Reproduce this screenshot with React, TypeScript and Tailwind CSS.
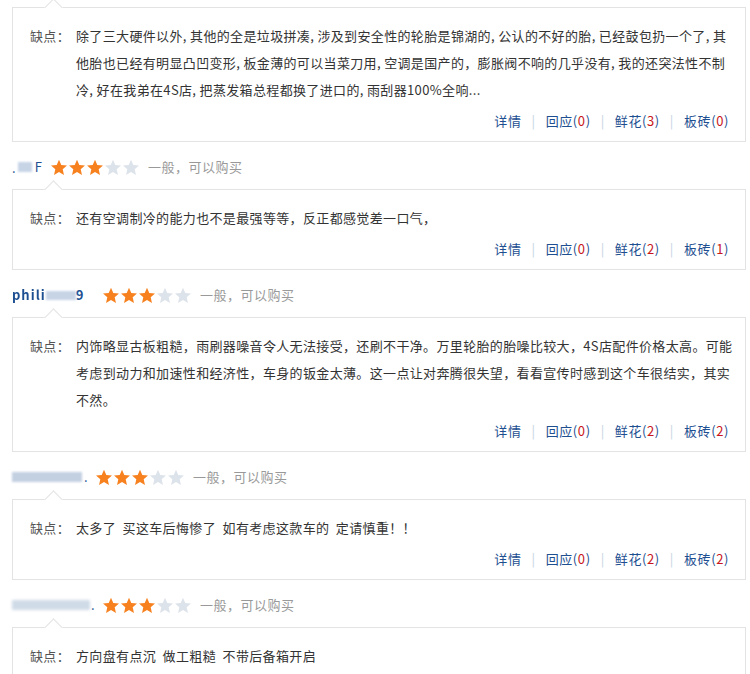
import React from 'react';

interface Review {
  user: React.ReactNode;
  userWidth: number;
  lines: string[];
  counts: [number, number, number];
}

const reviews: Review[] = [
  {
    user: null,
    userWidth: 0,
    lines: [
      '除了三大硬件以外, 其他的全是垃圾拼凑, 涉及到安全性的轮胎是锦湖的, 公认的不好的胎, 已经鼓包扔一个了, 其',
      '他胎也已经有明显凸凹变形, 板金薄的可以当菜刀用, 空调是国产的，膨胀阀不响的几乎没有, 我的还突法性不制',
      '冷, 好在我弟在4S店, 把蒸发箱总程都换了进口的, 雨刮器100%全响...',
    ],
    counts: [0, 3, 0],
  },
  {
    user: (
      <span className="flex items-center">
        <span className="text-[#1d4f91] text-[13px] leading-none">.</span>
        <span className="ml-[2px] inline-block h-[10px] w-[14px] bg-[#c6d4e6] blur-[1px]" />
        <span className="ml-[3px] text-[#1d4f91] text-[13px]">F</span>
      </span>
    ),
    userWidth: 38,
    lines: ['还有空调制冷的能力也不是最强等等，反正都感觉差一口气，'],
    counts: [0, 2, 1],
  },
  {
    user: (
      <span className="flex items-center">
        <span className="text-[#1d4f91] text-[13px] font-bold tracking-[1px] blur-[0.6px]">phili</span>
        <span className="inline-block h-[9px] w-[30px] bg-[#c6d4e6] blur-[1px]" />
        <span className="text-[#1d4f91] text-[13px] font-bold">9</span>
      </span>
    ),
    userWidth: 90,
    lines: [
      '内饰略显古板粗糙，雨刷器噪音令人无法接受，还刷不干净。万里轮胎的胎噪比较大，4S店配件价格太高。可能',
      '考虑到动力和加速性和经济性，车身的钣金太薄。这一点让对奔腾很失望，看看宣传时感到这个车很结实，其实',
      '不然。',
    ],
    counts: [0, 2, 2],
  },
  {
    user: (
      <span className="flex items-center">
        <span className="inline-block h-[10px] w-[70px] bg-[#c3d0e2] blur-[1px]" />
        <span className="ml-[2px] text-[#1d4f91] text-[13px]">.</span>
      </span>
    ),
    userWidth: 83,
    lines: ['太多了  买这车后悔惨了  如有考虑这款车的  定请慎重！！'],
    counts: [0, 2, 2],
  },
  {
    user: (
      <span className="flex items-center">
        <span className="inline-block h-[10px] w-[78px] bg-[#d0dbe8] blur-[1.5px]" />
        <span className="ml-[1px] text-[#1d4f91] text-[13px]">.</span>
      </span>
    ),
    userWidth: 90,
    lines: ['方向盘有点沉  做工粗糙  不带后备箱开启'],
    counts: [0, 0, 0],
  },
];

function Star({ on }: { on: boolean }) {
  return (
    <svg width="18" height="17" viewBox="0 0 24 23">
      <path
        d="M12 1l3.1 7.1 7.7.7-5.8 5.1 1.7 7.6L12 17.6l-6.7 3.9 1.7-7.6L1.2 8.8l7.7-.7z"
        fill={on ? '#f7811f' : '#dde3ea'}
      />
    </svg>
  );
}

function Actions({ counts }: { counts: [number, number, number] }) {
  const sep = <span className="mx-[10px] text-[#c5d3e3]">|</span>;
  const num = (n: number) => (
    <>
      (<span className="text-[#c8171c]">{n}</span>)
    </>
  );
  return (
    <div className="flex justify-end items-center h-[20px] pr-[3px] text-[13px] text-[#1d4f91] tracking-[0.6px]">
      <span>详情</span>
      {sep}
      <span>回应{num(counts[0])}</span>
      {sep}
      <span>鲜花{num(counts[1])}</span>
      {sep}
      <span>板砖{num(counts[2])}</span>
    </div>
  );
}

function Card({ review, last }: { review: Review; last: boolean }) {
  return (
    <div className="relative border border-[#e3e3e3] bg-white pl-[17px] pr-[13px] pt-[14px] pb-[10px]">
      <div className="absolute left-[34px] top-[-7px] h-[13px] w-[13px] rotate-45 border-l border-t border-[#e3e3e3] bg-white" />
      <div className="relative flex text-[13px] leading-[27px] tracking-[0.35px]">
        <span className="w-[46px] shrink-0 text-[#555]">缺点：</span>
        <div className="text-[#333] whitespace-pre">
          {review.lines.map((l, i) => (
            <div key={i}>{l}</div>
          ))}
        </div>
      </div>
      {!last && (
        <div className="mt-[8px]">
          <Actions counts={review.counts} />
        </div>
      )}
    </div>
  );
}

function RatingRow({ review }: { review: Review }) {
  return (
    <div className="flex items-center h-[20px] mt-[15px] mb-[12px] pl-[12px]">
      <div style={{ width: review.userWidth }} className="flex items-center">
        {review.user}
      </div>
      <div className="flex">
        {[0, 1, 2, 3, 4].map((i) => (
          <Star key={i} on={i < 3} />
        ))}
      </div>
      <span className="ml-[8px] text-[13px] text-[#999] tracking-[0.5px]">一般，可以购买</span>
    </div>
  );
}

export default function App() {
  return (
    <div
      className="w-[750px] h-[674px] overflow-hidden bg-white pt-[7px]"
      style={{ fontFamily: '"Noto Sans CJK SC", "Noto Sans", sans-serif' }}
    >
      <div className="pl-[12px] pr-[4px]">
        {reviews.map((r, i) => (
          <div key={i}>
            {i > 0 && (
              <div className="-ml-[12px]">
                <RatingRow review={r} />
              </div>
            )}
            <Card review={r} last={i === reviews.length - 1} />
          </div>
        ))}
      </div>
    </div>
  );
}
